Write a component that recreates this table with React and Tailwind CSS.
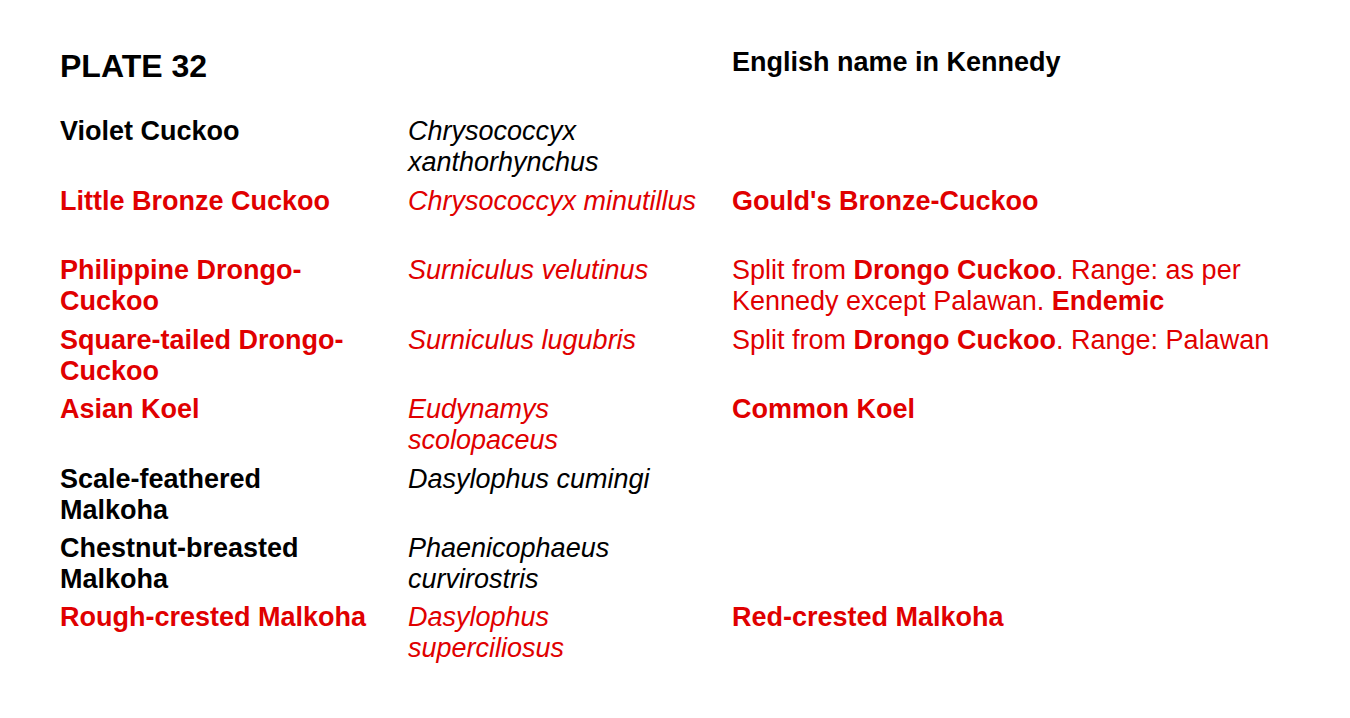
import React from "react";

const RED = "text-[#e00000]";

const rows = [
    {
        red: false,
        name: "Violet Cuckoo",
        sci: "Chrysococcyx xanthorhynchus",
        note: null,
    },
    {
        red: true,
        name: "Little Bronze Cuckoo",
        sci: "Chrysococcyx minutillus",
        note: <b>Gould's Bronze-Cuckoo</b>,
    },
    {
        red: true,
        name: "Philippine Drongo-Cuckoo",
        sci: "Surniculus velutinus",
        note: (
            <>
                Split from <b>Drongo Cuckoo</b>. Range: as per Kennedy except
                Palawan. <b>Endemic</b>
            </>
        ),
    },
    {
        red: true,
        name: "Square-tailed Drongo-Cuckoo",
        sci: "Surniculus lugubris",
        note: (
            <>
                Split from <b>Drongo Cuckoo</b>. Range: Palawan
            </>
        ),
    },
    {
        red: true,
        name: "Asian Koel",
        sci: "Eudynamys scolopaceus",
        note: <b>Common Koel</b>,
    },
    {
        red: false,
        name: "Scale-feathered Malkoha",
        sci: "Dasylophus cumingi",
        note: null,
    },
    {
        red: false,
        name: "Chestnut-breasted Malkoha",
        sci: "Phaenicophaeus curvirostris",
        note: null,
    },
    {
        red: true,
        name: "Rough-crested Malkoha",
        sci: "Dasylophus superciliosus",
        note: <b>Red-crested Malkoha</b>,
    },
];

export default function App() {
    return (
        <div className="min-h-[718px] w-[1350px] bg-white pl-[60px] pt-[47px] font-['Liberation_Sans',Arial,sans-serif] text-[27px] leading-[31px] text-black">
            {/* Header */}
            <div className="grid h-[69.43px] grid-cols-[348px_324px_570px]">
                <div className="pt-[1px] text-[32px] font-bold leading-[37px]">
                    PLATE 32
                </div>
                <div />
                <div className="font-bold">English name in Kennedy</div>
            </div>

            {/* Species rows */}
            {rows.map((row) => (
                <div
                    key={row.name}
                    className={`grid h-[69.43px] grid-cols-[348px_324px_570px] ${
                        row.red ? RED : "text-black"
                    }`}
                >
                    <div className="pr-[34px] font-bold">{row.name}</div>
                    <div className="pr-[30px] italic">{row.sci}</div>
                    <div className="pr-[20px]">{row.note}</div>
                </div>
            ))}
        </div>
    );
}
